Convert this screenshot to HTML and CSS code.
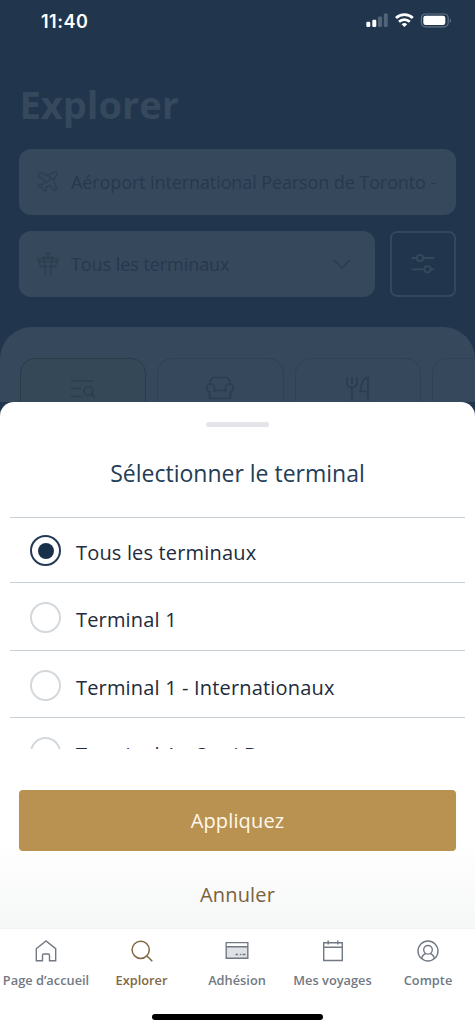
FILE: index.html
```html
<!DOCTYPE html>
<html lang="fr">
<head>
<meta charset="utf-8">
<meta name="viewport" content="width=device-width, initial-scale=1">
<title>Explorer</title>
<link rel="stylesheet" href="styles.css">
</head>
<body>
<div class="screen">
  <header class="status">
    <span class="time">11:40</span>
    <svg class="status-icons" width="86" height="16" viewBox="0 0 86 16">
      <g fill="#fff">
        <rect x="0.3" y="8.8" width="4" height="5.2" rx="1.2"/>
        <rect x="6.3" y="6.7" width="4" height="7.3" rx="1.2"/>
        <g fill="#50657a"><rect x="12" y="3.5" width="4" height="10.5" rx="1.2"/><rect x="17.8" y="0.5" width="4" height="13.5" rx="1.2"/></g>
      </g>
      <g fill="none" stroke="#fff" stroke-width="2.7">
        <path d="M30 5a12.2 12.2 0 0 1 16.8 0"/>
        <path d="M33 8.7a7.8 7.8 0 0 1 10.8 0"/>
      </g>
      <path fill="#fff" d="M35.6 11.2a4.2 4.2 0 0 1 5.6 0l-2.8 2.8z"/>
      <rect x="55.4" y="1" width="26.8" height="12.8" rx="4" fill="none" stroke="#627487" stroke-width="1.2"/>
      <rect x="57.3" y="2.8" width="22" height="9.2" rx="2.3" fill="#fff"/>
      <path d="M83.8 5.5v4.3c1.8-.8 1.8-3.5 0-4.3z" fill="#627487"/>
    </svg>
  </header>

  <h1 class="heading">Explorer</h1>

  <section class="filters">
    <div class="field airport">
      <svg class="field-icon" width="22" height="22" viewBox="0 0 22 22"><path d="M1.800 3.300 4 1.600 10.300 4.600 15.300 2C17.500.7 21 .8 20.300 3.300 19.900 5 18 6.500 16.400 8.200L19.600 17.200l-2 2.600-5.200-5.700-3.600 2.500.4 2.500-1.800 1.500-2-3.500-4-2 1.400-1.800 2.800.3 3-3.600L1.600 5.700z"/><path d="m9 12.500 6-6M10.500 4.800l5.700 3.800"/></svg>
      <span>Aéroport international Pearson de Toronto -</span>
    </div>
    <div class="filter-row">
      <div class="field terminal">
        <svg class="field-icon" width="22" height="24" viewBox="0 0 22 24"><path d="M11 1v4M8.500 1.800h5M5 5.500h12M1 6.500h20l-2.500 8h-15zM6.500 6.500l1.700 8M15.500 6.500l-1.700 8M2 9.500h18M8.200 14.500V23M13.800 14.500V23"/></svg>
        <span>Tous les terminaux</span>
        <svg class="chevron" width="18" height="10" viewBox="0 0 18 10"><path d="m1 1 8 8 8-8"/></svg>
      </div>
      <div class="tune">
        <svg width="24" height="20" viewBox="0 0 24 20"><path d="M.5 4H6M12 4h11.500M.5 15.300h13M19.500 15.300h4"/><circle cx="9" cy="4" r="3.200"/><circle cx="16.500" cy="15.300" r="3.200"/></svg>
      </div>
    </div>
  </section>

  <section class="categories">
    <div class="category active"><svg width="26" height="20" viewBox="0 0 26 20"><path d="M1 2h22M1 9.500h10M1 17.500h12M21.500 15l3.500 3.500"/><circle cx="18.500" cy="12" r="4.300"/></svg></div>
    <div class="category"><svg width="30" height="24" viewBox="0 0 30 24"><path d="M5 8V4.500L8 1.500h14l3 3V8M9.500 16v-4C9.500 9.500 7.500 8 5.500 8 1 8 0 14 4.500 15.500V21q0 1.500 1.500 1.500h18q1.500 0 1.500-1.500v-5.500C30 14 29 8 24.500 8c-2 0-4 1.500-4 4v4M9.500 14.500h11"/></svg></div>
    <div class="category"><svg width="26" height="26" viewBox="0 0 26 26"><path d="M2 1v5q0 5.500 5 5.500t5-5.500V1M7 1v7M7 11v14M23 25V1c-4.500 1-7.500 7-7.500 14.500H23"/></svg></div>
    <div class="category"></div>
  </section>

  <main class="sheet">
    <div class="handle"></div>
    <h2 class="sheet-title">Sélectionner le terminal</h2>
    <ul class="options">
      <li class="option selected"><i class="radio"></i><span>Tous les terminaux</span></li>
      <li class="option"><i class="radio"></i><span>Terminal 1</span></li>
      <li class="option"><i class="radio"></i><span>Terminal 1 - Internationaux</span></li>
      <li class="option"><i class="radio"></i><span>Terminal 1 - Quai D</span></li>
    </ul>
    <button class="apply">Appliquez</button>
    <button class="cancel">Annuler</button>
  </main>

  <nav class="tabs">
    <a class="tab"><svg viewBox="0 0 22 22"><path d="M1.300 8.700 11 1l9.700 7.700v12h-6.200v-5.500q0-1.200-1.200-1.200H8.700q-1.200 0-1.200 1.200v5.500H1.300z"/></svg><span>Page d’accueil</span></a>
    <a class="tab current"><svg viewBox="0 0 22 22"><circle cx="9.700" cy="9.800" r="8.600"/><path d="m16 16 5.300 5.200"/></svg><span>Explorer</span></a>
    <a class="tab"><svg class="card" viewBox="0 0 24 22"><path class="tint" d="M1.200 2.700h21.600v15.600H1.200z"/><path class="band" d="M1.900 3.400h20.200v2.800H1.900z"/><path d="M1.200 6.800h21.600M10.500 14.500h2.500M14.800 14.500h1.400M17.500 14.500h3"/></svg><span>Adhésion</span></a>
    <a class="tab"><svg viewBox="0 0 22 22"><path d="M1.700 2.700h18.600v17.800H1.700zM1.700 7.200h18.600M6.200.5v4M15.800.5v4"/></svg><span>Mes voyages</span></a>
    <a class="tab"><svg viewBox="0 0 22 22"><circle cx="11" cy="11" r="10"/><circle cx="11" cy="9.800" r="4.300"/><path d="M4.800 18.800q.3-4 4-5.300M17.200 18.800q-.3-4-4-5.300"/></svg><span>Compte</span></a>
  </nav>
  <div class="home-bar"></div>
</div>
</body>
</html>
```

FILE: styles.css
```css
* { box-sizing: border-box; }
body { margin: 0; font-family: "Open Sans", sans-serif; background: #21354d; }
.screen { width: 475px; height: 1024px; overflow: hidden; display: flex; flex-direction: column; background: #21354d; }
svg { display: block; fill: none; flex: none; }

.status { height: 42px; padding: 0 23px 0 41px; display: flex; align-items: center; justify-content: space-between; color: #fff; }
.time { padding-top: 1px; font: 600 18px/42px Inter, sans-serif; letter-spacing: 0.5px; }

.heading { margin: 35px 0 0 19.5px; height: 54px; font-size: 38px; line-height: 54px; font-weight: 700; color: #35485c; }

.filters { margin: 18px 19px 0; display: flex; flex-direction: column; gap: 16px; }
.field { height: 66px; border-radius: 12px; background: #36485c; display: flex; align-items: center; color: #26394f; font-size: 18px; letter-spacing: -0.06px; white-space: nowrap; }
.airport { letter-spacing: -0.1px; }
.field-icon { width: 22px; margin: 0 12px 0 18px; stroke: #2d3f4f; stroke-width: 1.4; stroke-linejoin: round; }
.filter-row { display: flex; gap: 15px; }
.terminal { flex: 1; }
.chevron { margin: 0 24px 0 auto; stroke: #273b50; stroke-width: 1.2; }
.tune { width: 66px; height: 66px; border: 2px solid #34475b; border-radius: 7px; display: grid; place-items: center; }
.tune svg { stroke: #35485c; stroke-width: 1.8; }

.categories { margin-top: 30px; height: 75px; padding: 31px 0 0 19.5px; display: flex; gap: 11px; overflow: hidden; border-radius: 32px 32px 0 0; background: #36485c; }
.category { flex: 0 0 126.5px; height: 90px; padding-top: 17px; display: flex; justify-content: center; align-items: flex-start; border: 1px solid #2f4355; border-radius: 15px; }
.category svg { stroke: #2b3e50; stroke-width: 1.7; }
.category.active { background: #354858; border-color: #2b3c4b; }
.category.active svg { margin-top: 3px; }

.sheet { height: 526px; flex: none; display: flex; flex-direction: column; align-items: center; border-radius: 14px 14px 0 0; background: linear-gradient(#fff 84%, #f6f7f7); }
.handle { width: 63px; height: 5px; margin-top: 20px; border-radius: 3px; background: #e3e5e8; }
.sheet-title { margin: 26px 0 0; height: 40px; line-height: 40px; font-size: 23px; font-weight: 400; color: #243d57; }
.options { width: 455px; height: 232px; margin: 24px 0 0; padding: 0; overflow: hidden; list-style: none; border-top: 1px solid #c9d0d6; }
.option { height: 67.5px; padding: 3px 20px 0; display: flex; align-items: center; gap: 15px; border-bottom: 1.5px solid #c9d0d6; font-size: 20px; letter-spacing: 0.17px; color: #222b3c; }
.option.selected { height: 65px; padding-top: 1px; }
.option span { padding-top: 4px; }
.option.selected span { padding-top: 3px; }
.radio { width: 31px; height: 31px; border: 2px solid #d3d8dd; border-radius: 50%; display: grid; place-items: center; }
.selected .radio { border-color: #233a54; }
.selected .radio::after { content: ""; width: 16px; height: 16px; border-radius: 50%; background: #19304b; }
.apply, .cancel { padding: 0; border: 0; font: 400 20px/1 "Open Sans", sans-serif; letter-spacing: 0.15px; }
.apply { width: 437px; height: 61px; margin-top: 41px; border-radius: 4px; background: #b99251; color: #fff8ec; }
.cancel { height: 40px; margin-top: 24px; background: none; color: #7a6240; }

.tabs { height: 72px; flex: none; display: grid; grid-template-columns: repeat(5, 95.5px); justify-content: center; background: #fff; border-top: 1px solid #f0f2f3; padding: 11px 1px 0 0; }
.tab { display: flex; flex-direction: column; align-items: center; font-size: 12.8px; font-weight: 600; line-height: 20px; color: #717983; white-space: nowrap; }
.tab svg { width: 22px; height: 22px; margin-bottom: 8px; stroke: #717983; stroke-width: 1.4; }
.tab svg.card { width: 24px; }
.tab .tint { fill: #dfe1e4; }
.tab .band { fill: #fff; stroke: none; }
.tab.current { color: #7f6743; }
.tab.current svg { stroke: #7f6743; stroke-width: 1.5; }
.home-bar { width: 475px; height: 24px; flex: none; background: #fff; padding: 14px 152px 4px; }
.home-bar::before { content: ""; display: block; height: 6px; border-radius: 3px; background: #000; }
```
